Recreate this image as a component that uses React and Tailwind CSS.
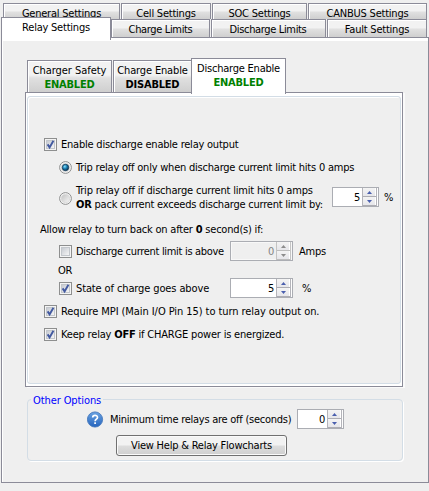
import React from "react";

const HEX = "border-[#8b8b98]";

function Tab({ className, children }) {
  return (
    <div className={`border-2 border-b-0 border-t-[1px] border-l-[1px] ${HEX} shadow-[inset_1px_1px_0_#ffffff] bg-gradient-to-b from-[#f2f2f2] from-45% via-[#e0e0e0] via-55% to-[#cfcfcf] text-center whitespace-nowrap ${className}`}>
      {children}
    </div>
  );
}

function Check({ on }) {
  return (
    <svg className="h-[13px] w-[13px] shrink-0" viewBox="0 0 13 13">
      <defs>
        <linearGradient id="box" x1="0" y1="0" x2="1" y2="1">
          <stop offset="0" stopColor="#c4c8cf" />
          <stop offset="1" stopColor="#f8f8f8" />
        </linearGradient>
      </defs>
      <rect x=".5" y=".5" width="12" height="12" fill="#f4f4f4" stroke="#8e8f8f" />
      <rect x="2.5" y="2.5" width="8" height="8" fill="url(#box)" stroke="#c3c7cc" />
      {on && <path d="M3.6 6.4 L5.6 9.4 L9.4 2.8" fill="none" stroke="#4259a0" strokeWidth="1.9" />}
    </svg>
  );
}

function Radio({ on }) {
  return (
    <svg className="h-[13px] w-[13px] shrink-0" viewBox="0 0 13 13">
      <defs>
        <linearGradient id="ring" x1="0" y1="0" x2="1" y2="1">
          <stop offset="0" stopColor="#c2c2c2" />
          <stop offset="1" stopColor="#f6f6f6" />
        </linearGradient>
        <radialGradient id="dot" cx=".38" cy=".35" r=".65">
          <stop offset="0" stopColor="#8fe0fa" />
          <stop offset=".45" stopColor="#2089bd" />
          <stop offset="1" stopColor="#0b3556" />
        </radialGradient>
      </defs>
      <circle cx="6.5" cy="6.5" r="5.9" fill="#f6f6f6" stroke="#8e8f8f" />
      <circle cx="6.5" cy="6.5" r="4.1" fill="url(#ring)" stroke="#d0d0d0" strokeWidth=".6" />
      {on && <circle cx="6.5" cy="6.5" r="3.2" fill="url(#dot)" stroke="#123b59" strokeWidth=".8" />}
    </svg>
  );
}

function Arrow({ up, off }) {
  return (
    <div className="flex h-[8px] items-center justify-center border-r border-white bg-gradient-to-b from-[#f4f4f4] to-[#e6e6ea]">
      <svg className="h-[3px] w-[5px]" viewBox="0 0 5 3">
        <path d={up ? "M2.5 0 L5 3 H0 Z" : "M0 0 H5 L2.5 3 Z"} fill={off ? "#8c8c8c" : "#4a5fae"} />
      </svg>
    </div>
  );
}

function Spinner({ value, off, className }) {
  return (
    <div className={`flex h-[20px] shrink-0 border border-[#abadb3] p-px ${off ? "bg-[#f8f8f8] text-[#858585]" : "bg-white"} ${className}`}>
      <div className={`flex-1 pr-[2px] text-right leading-[18px] ${off ? "bg-[#efefef]" : ""}`}>{value}</div>
      <div className={`-my-px flex w-[15px] flex-col justify-between border-x pb-px ${off ? "border-[#c4c4c4] bg-[#bdbdbd]" : "border-[#b4b4ba] bg-[#adadb3]"}`}>
        <Arrow up off={off} />
        <Arrow off={off} />
      </div>
    </div>
  );
}

export default function App() {
  return (
    <div className="flex h-[491px] w-[429px] flex-col overflow-hidden bg-[#efefef] font-['DejaVu_Sans_Condensed','DejaVu_Sans',sans-serif] text-[11px] leading-[13px] tracking-[-0.22px] text-black [font-stretch:condensed]">
      <div className="box-content flex h-[16px] gap-px pl-[3px] pt-[3px]">
        <Tab className="w-[117px] border-r-[1px] pt-[3px]">General Settings</Tab>
        <Tab className="w-[90px] border-r-[1px] pt-[3px]">Cell Settings</Tab>
        <Tab className="w-[95px] border-r-[1px] pt-[3px]">SOC Settings</Tab>
        <Tab className="w-[119px] border-r-[1px] pt-[3px]">CANBUS Settings</Tab>
      </div>
      <div className="flex h-[18px] shrink-0 pl-px">
        <div className={`z-10 -mt-[2px] h-[23px] w-[110px] border border-b-0 ${HEX} bg-white pt-[3px] text-center`}>Relay Settings</div>
        <Tab className="w-[99px] border-l-0 border-r-[1px] pt-[3px] tracking-[-0.35px]">Charge Limits</Tab>
        <Tab className="ml-px w-[115px] border-r-[1px] pr-px pt-[3px] tracking-[-0.35px]">Discharge Limits</Tab>
        <Tab className="ml-px w-[100px] border-r-[1px] pt-[3px]">Fault Settings</Tab>
      </div>

      <div className={`ml-px flex h-[446px] w-[428px] shrink-0 flex-col border ${HEX} pl-[23px] pt-[20px] shadow-[inset_1px_3px_0_#ffffff]`}>
        <div className="flex h-[34px] shrink-0 items-end pl-[2px]">
          <Tab className="h-[32px] w-[85px] border-r-[1px] pt-[3px] leading-[14px]">
            <span className="tracking-[-0.05px]">Charger Safety</span><br /><b className="text-[#008000]">ENABLED</b>
          </Tab>
          <Tab className="ml-px h-[32px] w-[78px] border-r-0 pt-[3px] leading-[14px]">
            <span className="tracking-[-0.15px]">Charge Enable</span><br /><b>DISABLED</b>
          </Tab>
          <div className={`z-10 -mb-[2px] h-[36px] w-[95px] border border-b-0 ${HEX} bg-white pt-[3px] text-center leading-[14px]`}>
            Discharge Enable<br /><b className="text-[#008000]">ENABLED</b>
          </div>
        </div>

        <div className={`h-[295px] w-[378px] shrink-0 border ${HEX} bg-white px-px pb-[2px] pt-[3px] shadow-[2px_1px_0_#fafafa]`}>
          <div className="h-full rounded-[3px] border border-[#d3dde6] bg-[#efefef] pl-[12px] pt-[38px] shadow-[inset_1px_1px_0_#ffffff]">
            <div className="ml-[4px] mt-[3px] flex h-[13px] items-center gap-[4px]"><Check on /><span>Enable discharge enable relay output</span></div>
            <div className="ml-[19px] mt-[10px] flex h-[13px] items-center gap-[4px]"><Radio on /><span>Trip relay off only when discharge current limit hits 0 amps</span></div>
            <div className="ml-[19px] mt-[10px] flex h-[28px] items-center">
              <Radio />
              <div className="ml-[4px] w-[256px] whitespace-nowrap leading-[14px]">
                <span className="tracking-[-0.19px]">Trip relay off if discharge current limit hits 0 amps</span><br /><b>OR</b> pack current exceeds discharge current limit by:
              </div>
              <Spinner value="5" className="mb-[2px] w-[47px]" />
              <span className="mb-[2px] ml-[5px]">%</span>
            </div>
            <div className="mt-[11px] h-[13px] tracking-[-0.2px]">Allow relay to turn back on after <b>0</b> second(s) if:</div>
            <div className="ml-[19px] mt-[5px] flex h-[20px] items-center">
              <Check /><span className="ml-[4px] w-[154px] tracking-[-0.31px]">Discharge current limit is above</span>
              <Spinner value="0" off className="w-[63px]" /><span className="ml-[6px]">Amps</span>
            </div>
            <div className="ml-[18px] mt-[3px] h-[13px]">OR</div>
            <div className="ml-[19px] mt-px flex h-[20px] items-center">
              <Check on /><span className="ml-[4px] w-[154px] tracking-[-0.12px]">State of charge goes above</span>
              <Spinner value="5" className="w-[63px]" /><span className="ml-[9px]">%</span>
            </div>
            <div className="ml-[4px] mt-[7px] flex h-[13px] items-center gap-[4px]"><Check on /><span className="tracking-[-0.07px]">Require MPI (Main I/O Pin 15) to turn relay output on.</span></div>
            <div className="ml-[4px] mt-[10px] flex h-[13px] items-center gap-[4px]"><Check on /><span className="tracking-[-0.19px]">Keep relay <b>OFF</b> if CHARGE power is energized.</span></div>
          </div>
        </div>

        <fieldset className="ml-[2px] mt-[6px] h-[68px] w-[376px] shrink-0 rounded-[4px] border border-[#d3dde6] shadow-[1px_1px_0_#ffffff]">
          <legend className="ml-[3px] px-[2px] tracking-[-0.1px] text-[#0000ff]"><span className="relative top-px">Other Options</span></legend>
          <div className="ml-[59px] mt-[3px] flex h-[20px] items-center">
            <svg className="h-[17px] w-[17px]" viewBox="0 0 17 17">
              <defs>
                <linearGradient id="help" x1="0" y1="0" x2="0" y2="1">
                  <stop offset="0" stopColor="#6ba3e2" />
                  <stop offset="1" stopColor="#2564bd" />
                </linearGradient>
              </defs>
              <circle cx="8" cy="8.5" r="7.6" fill="url(#help)" stroke="#3a70b8" strokeWidth=".8" />
              <path d="M5.7 6.6 C5.7 3.6 10.5 3.7 10.5 6.4 C10.5 8.2 8.1 8.1 8.1 10.2 M8.1 11.3 V13" fill="none" stroke="#fff" strokeWidth="1.7" />
            </svg>
            <span className="ml-[6px] w-[187px] tracking-[-0.26px]">Minimum time relays are off (seconds)</span>
            <Spinner value="0" className="w-[47px]" />
          </div>
          <button className="ml-[88px] mt-[6px] block h-[21px] w-[171px] rounded-[3px] border border-[#707070] bg-gradient-to-b from-[#f2f2f2] from-48% via-[#dddddd] via-52% to-[#cfcfcf] shadow-[inset_0_0_0_1px_#fafafa]">
            View Help &amp; Relay Flowcharts
          </button>
        </fieldset>
      </div>
    </div>
  );
}
